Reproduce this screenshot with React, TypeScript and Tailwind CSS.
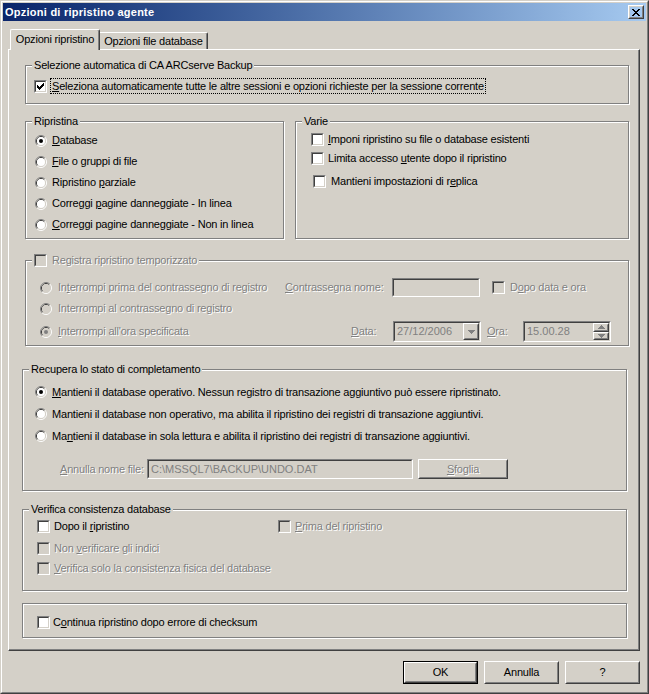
import React from 'react';

const FONT = "font-['Liberation_Sans',Arial,sans-serif]";

type Kids = { children?: React.ReactNode; className?: string };

// label with one mnemonic letter underlined
const Mn = ({ t, u, off }: { t: string; u?: number; off?: boolean }) => (
  <span className={off ? 'whitespace-nowrap text-[#808080] [text-shadow:1px_1px_0_#fff]' : 'whitespace-nowrap'}>
    {u === undefined ? t : (
      <>
        {t.slice(0, u)}
        <span className="underline underline-offset-[1px]">{t[u]}</span>
        {t.slice(u + 1)}
      </>
    )}
  </span>
);

const Tick = ({ off }: { off?: boolean }) => (
  <svg width="7" height="7" viewBox="0 0 7 7" shapeRendering="crispEdges" className="block">
    <path
      fill={off ? '#808080' : '#000'}
      d="M0 2h1v3H0zM1 3h1v3H1zM2 4h1v3H2zM3 3h1v3H3zM4 2h1v3H4zM5 1h1v3H5zM6 0h1v3H6z"
    />
  </svg>
);

const CheckBox = ({ on, off }: { on?: boolean; off?: boolean }) => (
  <span className="block w-[13px] h-[13px] shrink-0 border border-t-[#808080] border-l-[#808080] border-b-white border-r-white">
    <span
      className={`block w-full h-full p-px border border-t-[#404040] border-l-[#404040] border-b-[#D4D0C8] border-r-[#D4D0C8] ${
        off ? 'bg-[#D4D0C8]' : 'bg-white'
      }`}
    >
      {on && <Tick off={off} />}
    </span>
  </span>
);

const Radio = ({ on, off }: { on?: boolean; off?: boolean }) => (
  <svg width="12" height="12" viewBox="0 0 12 12" className="block shrink-0">
    <path d="M2.11 9.89A5.5 5.5 0 0 1 9.89 2.11" fill="none" stroke="#808080" />
    <path d="M9.89 2.11A5.5 5.5 0 0 1 2.11 9.89" fill="none" stroke="#fff" />
    <path d="M2.82 9.18A4.5 4.5 0 0 1 9.18 2.82" fill="none" stroke="#404040" />
    <path d="M9.18 2.82A4.5 4.5 0 0 1 2.82 9.18" fill="none" stroke="#D4D0C8" />
    <circle cx="6" cy="6" r="4" fill={off ? '#D4D0C8' : '#fff'} />
    {on && <circle cx="6" cy="6" r="2" fill={off ? '#808080' : '#000'} />}
  </svg>
);

const Btn = ({ children, className, def }: Kids & { def?: boolean }) => (
  <div className={`${def ? 'border border-black' : ''} ${className ?? ''}`}>
    <div className="h-full border border-t-white border-l-white border-b-[#404040] border-r-[#404040]">
      <div className="h-full border border-t-[#D4D0C8] border-l-[#D4D0C8] border-b-[#808080] border-r-[#808080] flex items-center justify-center">
        {children}
      </div>
    </div>
  </div>
);

const Field = ({ children, className }: Kids) => (
  <div className={`border border-t-[#808080] border-l-[#808080] border-b-white border-r-white ${className ?? ''}`}>
    <div className="h-full border border-t-[#404040] border-l-[#404040] border-b-[#D4D0C8] border-r-[#D4D0C8] bg-[#D4D0C8] flex items-center">
      {children}
    </div>
  </div>
);

const Group = ({ title, children, className }: Kids & { title: React.ReactNode }) => (
  <div className={`relative shrink-0 border border-[#808080] shadow-[inset_1px_1px_0_#fff,1px_1px_0_#fff] ${className ?? ''}`}>
    <div className="absolute -top-[7px] left-[6px] px-[2px] bg-[#D4D0C8] leading-[13px] flex items-center">{title}</div>
    {children}
  </div>
);

const Arrow = ({ up }: { up?: boolean }) => (
  <svg width="7" height="4" viewBox="0 0 7 4" shapeRendering="crispEdges" className="block">
    <path fill="#808080" d={up ? 'M3 0h1v1h1v1h1v1h1v1H0V3h1V2h1V1h1z' : 'M0 0h7v1H6v1H5v1H4v1H3V3H2V2H1V1H0z'} />
  </svg>
);

export default function App() {
  return (
    <div
      className={`w-[649px] h-[694px] bg-[#D4D0C8] text-[11px] leading-[13px] tracking-[-0.2px] text-black ${FONT} border border-t-[#D4D0C8] border-l-[#D4D0C8] border-b-[#404040] border-r-[#404040]`}
    >
      <div className="h-full border border-t-white border-l-white border-b-[#808080] border-r-[#808080] p-px flex flex-col">
        {/* title bar */}
        <div className="h-[18px] shrink-0 flex items-center justify-between bg-linear-to-r from-[#0A246A] to-[#A6CAF0] pl-[2px] pr-[2px]">
          <span className="font-bold text-white tracking-[0.25px]">Opzioni di ripristino agente</span>
          <Btn className="w-[16px] h-[14px]">
            <svg width="8" height="7" viewBox="0 0 8 7" shapeRendering="crispEdges" className="block">
              <path
                fill="#000"
                d="M0 0h2v1H0zM6 0h2v1H6zM1 1h2v1H1zM5 1h2v1H5zM2 2h4v1H2zM3 3h2v1H3zM2 4h4v1H2zM1 5h2v1H1zM5 5h2v1H5zM0 6h2v1H0zM6 6h2v1H6z"
              />
            </svg>
          </Btn>
        </div>

        {/* tabs */}
        <div className="flex items-end h-[20px] mt-[8px] ml-[7px] shrink-0">
          <div className="relative z-10 -mb-px h-[21px] w-[90px] bg-[#D4D0C8] border-t border-l border-r border-t-white border-l-white border-r-[#404040] rounded-t-[2px] shadow-[inset_-1px_0_0_#808080] flex items-start justify-center pt-[3px]">
            Opzioni ripristino
          </div>
          <div className="h-[17px] w-[108px] border-t border-r border-t-white border-r-[#404040] rounded-tr-[2px] shadow-[inset_-1px_0_0_#808080] flex items-start justify-center pt-[2px]">
            Opzioni file database
          </div>
        </div>

        {/* tab pane */}
        <div className="ml-[5px] w-[632px] h-[602px] shrink-0 border border-t-white border-l-white border-b-[#404040] border-r-[#404040] shadow-[inset_-1px_-1px_0_#808080] flex flex-col">
          <Group
            className="ml-[16px] mt-[15px] w-[604px] h-[39px]"
            title={<span>Selezione automatica di CA ARCserve Backup</span>}
          >
            <div className="flex items-center pl-[8px] pt-[12px]">
              <CheckBox on />
              <span className="ml-[3px] h-[16px] px-px border border-dotted border-black flex items-center">
                <Mn t="Seleziona automaticamente tutte le altre sessioni e opzioni richieste per la sessione corrente" u={0} />
              </span>
            </div>
          </Group>

          <div className="flex gap-[11px] ml-[16px] mt-[17px]">
            <Group className="w-[259px] h-[118px]" title={<span>Ripristina</span>}>
              <div className="flex flex-col pl-[9px] pt-[8px]">
                {[
                  { t: 'Database', u: 0, on: true },
                  { t: 'File o gruppi di file', u: 0 },
                  { t: 'Ripristino parziale', u: 11 },
                  { t: 'Correggi pagine danneggiate - In linea', u: 9 },
                  { t: 'Correggi pagine danneggiate - Non in linea', u: 0 },
                ].map((r) => (
                  <div key={r.t} className="h-[21px] flex items-center gap-[5px]">
                    <Radio on={r.on} />
                    <Mn t={r.t} u={r.u} />
                  </div>
                ))}
              </div>
            </Group>
            <Group className="w-[334px] h-[118px]" title={<span>Varie</span>}>
              <div className="flex flex-col pl-[15px] pt-[8px]">
                <div className="h-[19px] flex items-center gap-[4px]">
                  <CheckBox />
                  <Mn t="Imponi ripristino su file o database esistenti" u={0} />
                </div>
                <div className="h-[19px] flex items-center gap-[4px]">
                  <CheckBox />
                  <Mn t="Limita accesso utente dopo il ripristino" u={15} />
                </div>
                <div className="h-[19px] mt-[4px] ml-[2px] flex items-center gap-[5px]">
                  <CheckBox />
                  <Mn t="Mantieni impostazioni di replica" u={26} />
                </div>
              </div>
            </Group>
          </div>

          <Group
            className="ml-[16px] mt-[21px] w-[604px] h-[86px]"
            title={
              <span className="flex items-center gap-[5px]">
                <CheckBox off />
                <Mn t="Registra ripristino temporizzato" off />
              </span>
            }
          >
            <div className="flex flex-col pl-[14px] pt-[16px]">
              <div className="h-[21px] flex items-center">
                <div className="w-[245px] flex items-center gap-[6px]">
                  <Radio off />
                  <Mn t="Interrompi prima del contrassegno di registro" u={2} off />
                </div>
                <span className="w-[107px]">
                  <Mn t="Contrassegna nome:" u={0} off />
                </span>
                <Field className="w-[88px] h-[19px]" />
                <span className="ml-[12px] mr-[5px]">
                  <CheckBox off />
                </span>
                <Mn t="Dopo data e ora" u={1} off />
              </div>
              <div className="h-[21px] flex items-center gap-[6px]">
                <Radio off />
                <Mn t="Interrompi al contrassegno di registro" off />
              </div>
              <div className="h-[23px] mt-px flex items-center">
                <div className="w-[245px] flex items-center gap-[6px]">
                  <Radio on off />
                  <Mn t="Interrompi all'ora specificata" u={0} off />
                </div>
                <span className="ml-[66px] w-[42px]">
                  <Mn t="Data:" u={0} off />
                </span>
                <Field className="w-[88px] h-[21px]">
                  <span className="flex-1 pl-[2px] text-[#808080] tracking-normal">27/12/2006</span>
                  <Btn className="w-[16px] h-full">
                    <Arrow />
                  </Btn>
                </Field>
                <span className="ml-[6px] w-[36px]">
                  <Mn t="Ora:" u={0} off />
                </span>
                <Field className="w-[88px] h-[21px]">
                  <span className="flex-1 pl-[2px] text-[#808080] tracking-normal">15.00.28</span>
                  <div className="w-[16px] h-full flex flex-col">
                    <Btn className="flex-1">
                      <Arrow up />
                    </Btn>
                    <Btn className="flex-1">
                      <Arrow />
                    </Btn>
                  </div>
                </Field>
              </div>
            </div>
          </Group>

          <Group className="ml-[13px] mt-[23px] w-[605px] h-[122px]" title={<span>Recupera lo stato di completamento</span>}>
            <div className="flex flex-col pl-[12px] pt-[11px]">
              {[
                { t: 'Mantieni il database operativo. Nessun registro di transazione aggiuntivo può essere ripristinato.', u: 0, on: true },
                { t: 'Mantieni il database non operativo, ma abilita il ripristino dei registri di transazione aggiuntivi.', u: 34 },
                { t: 'Mantieni il database in sola lettura e abilita il ripristino dei registri di transazione aggiuntivi.', u: 2 },
              ].map((r) => (
                <div key={r.t} className="h-[22px] flex items-center gap-[5px]">
                  <Radio on={r.on} />
                  <Mn t={r.t} u={r.u} />
                </div>
              ))}
              <div className="h-[20px] mt-[12px] ml-[25px] flex items-center">
                <span className="w-[87px]">
                  <Mn t="Annulla nome file:" u={0} off />
                </span>
                <Field className="w-[266px] h-[20px]">
                  <span className="pl-[2px] text-[#808080] tracking-normal">C:\MSSQL7\BACKUP\UNDO.DAT</span>
                </Field>
                <Btn className="ml-[5px] w-[90px] h-[20px]">
                  <Mn t="Sfoglia" u={0} off />
                </Btn>
              </div>
            </div>
          </Group>

          <Group className="ml-[13px] mt-[18px] w-[605px] h-[82px]" title={<span>Verifica consistenza database</span>}>
            <div className="flex flex-col pl-[14px] pt-[6px]">
              <div className="h-[20px] flex items-center">
                <div className="w-[241px] flex items-center gap-[4px]">
                  <CheckBox />
                  <Mn t="Dopo il ripristino" u={8} />
                </div>
                <div className="flex items-center gap-[4px]">
                  <CheckBox off />
                  <Mn t="Prima del ripristino" u={0} off />
                </div>
              </div>
              <div className="h-[20px] mt-[2px] flex items-center gap-[4px]">
                <CheckBox off />
                <Mn t="Non verificare gli indici" u={4} off />
              </div>
              <div className="h-[20px] flex items-center gap-[4px]">
                <CheckBox off />
                <Mn t="Verifica solo la consistenza fisica del database" u={0} off />
              </div>
            </div>
          </Group>

          <Group className="ml-[13px] mt-[12px] w-[605px] h-[35px]" title={null}>
            <div className="flex items-center gap-[3px] pl-[14px] pt-[8px] h-[28px]">
              <CheckBox />
              <Mn t="Continua ripristino dopo errore di checksum" u={1} />
            </div>
          </Group>
        </div>

        {/* dialog buttons */}
        <div className="ml-[5px] w-[632px] mt-[10px] flex justify-end gap-[6px]">
          <Btn def className="w-[75px] h-[23px]">OK</Btn>
          <Btn className="w-[75px] h-[23px]">Annulla</Btn>
          <Btn className="w-[75px] h-[23px]">?</Btn>
        </div>
      </div>
    </div>
  );
}
